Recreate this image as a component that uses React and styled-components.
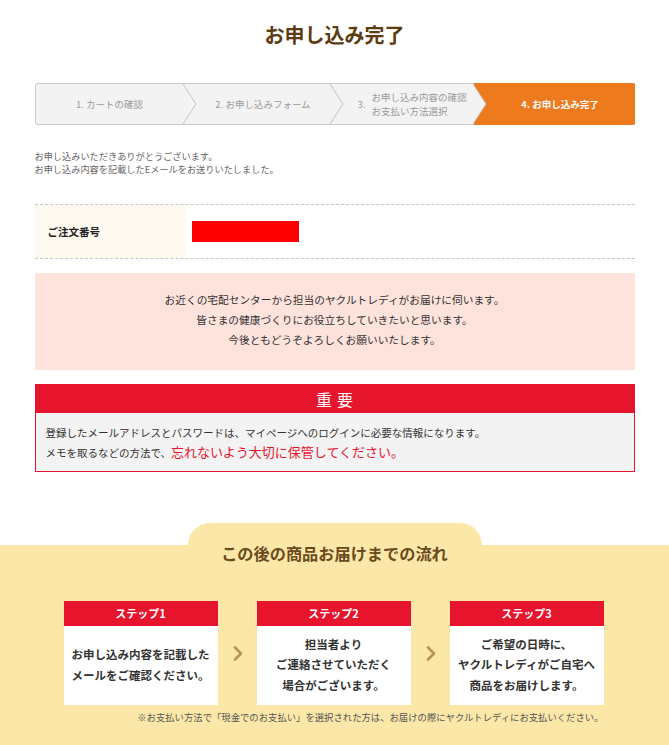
import React from "react";
import styled, { createGlobalStyle } from "styled-components";

const Global = createGlobalStyle`
  html, body { margin: 0; padding: 0; background: #fff; }
  body { font-family: "Noto Sans CJK JP", "Noto Sans", sans-serif; color: #333; }
  * { box-sizing: border-box; }
`;

const Page = styled.div`
  width: 669px;
  min-height: 745px;
  overflow: hidden;
`;

const Main = styled.div`
  width: 600px;
  margin: 0 auto;
`;

const Title = styled.h1`
  margin: 0;
  padding-top: 21px;
  text-align: center;
  font-size: 20px;
  line-height: 28px;
  font-weight: 700;
  color: #5e3c12;
`;

const Stepper = styled.div`
  display: flex;
  margin-top: 34px;
  height: 42px;
  border: 1px solid #cacaca;
  border-radius: 2px;
  background: #f3f3f3;
`;

const Step = styled.div`
  position: relative;
  flex: ${(p) => p.$basis ? `0 0 ${p.$basis}px` : "1 1 auto"};
  display: flex;
  align-items: center;
  justify-content: center;
  padding-left: ${(p) => p.$pad}px;
  font-size: 9.5px;
  line-height: 14px;
  color: ${(p) => (p.$active ? "#fff" : "#9a9a9a")};
  font-weight: ${(p) => (p.$active ? 700 : 400)};
  background: ${(p) => (p.$active ? "#ee7a1e" : "transparent")};
  margin: ${(p) => (p.$active ? "-1px -1px -1px 0" : "0")};
  border-radius: ${(p) => (p.$active ? "0 2px 2px 0" : "0")};
`;

const StepNum = styled.span`
  margin-right: 6px;
`;

const StepLines = styled.span`
  display: block;
`;

const ChevronSvg = styled.svg`
  position: absolute;
  top: 0;
  right: -13px;
  width: 14px;
  height: 100%;
  z-index: 2;
`;

const Chevron = () => (
  <ChevronSvg viewBox="0 0 14 40" preserveAspectRatio="none">
    <polygon points="0,0 13,20 0,40" fill="#f3f3f3" />
    <polyline points="0,0 13,20 0,40" fill="none" stroke="#c4c4c4" strokeWidth="1" />
  </ChevronSvg>
);

const Thanks = styled.p`
  margin: 25px 0 0;
  font-size: 9.2px;
  line-height: 13px;
  color: #666;
`;

const OrderRow = styled.div`
  display: flex;
  margin-top: 28px;
  height: 55px;
  border-top: 1px dashed #c6c6c6;
  border-bottom: 1px dashed #c6c6c6;
`;

const OrderLabel = styled.div`
  width: 150px;
  display: flex;
  align-items: center;
  padding-left: 13px;
  background: #fef9ee;
  font-size: 10.5px;
  font-weight: 700;
  color: #222;
`;

const OrderValue = styled.div`
  flex: 1;
  display: flex;
  align-items: center;
  padding-left: 7px;
`;

const Redacted = styled.div`
  width: 107px;
  height: 21px;
  background: #ff0000;
`;

const PinkBox = styled.div`
  margin-top: 14px;
  padding: 17px 0 20px;
  background: #fee2dc;
  text-align: center;
  font-size: 10.7px;
  line-height: 20px;
  color: #333;
`;

const Important = styled.div`
  margin-top: 14px;
  border: 1px solid #e6142d;
  background: #f3f3f3;
`;

const ImportantHead = styled.div`
  height: 28px;
  background: #e6142d;
  color: #fff;
  text-align: center;
  font-size: 16px;
  line-height: 28px;
  letter-spacing: 5px;
  padding-left: 5px;
`;

const ImportantBody = styled.div`
  padding: 10px 10px 9px;
  font-size: 10.5px;
  line-height: 19px;
  color: #333;
`;

const Alert = styled.span`
  color: #e6142d;
  font-size: 13px;
`;

const Flow = styled.section`
  margin-top: 51px;
`;

const Tab = styled.div`
  width: 294px;
  height: 22px;
  margin: 0 auto;
  background: #fbe8a9;
  border-radius: 24px 24px 0 0;
`;

const FlowBody = styled.div`
  background: #fbe8a9;
  padding-bottom: 40px;
`;

const FlowTitle = styled.h2`
  margin: 0;
  text-align: center;
  font-size: 16.2px;
  line-height: 16px;
  font-weight: 700;
  color: #6b4a1c;
`;

const Cards = styled.div`
  display: flex;
  justify-content: center;
  align-items: center;
  margin-top: 40px;
  margin-left: -2px;
`;

const Card = styled.div`
  width: 154px;
  height: 104px;
  background: #fff;
  display: flex;
  flex-direction: column;
`;

const CardHead = styled.div`
  height: 25px;
  background: #e6142d;
  color: #fff;
  font-weight: 700;
  font-size: 11px;
  line-height: 25px;
  text-align: center;
`;

const CardBody = styled.div`
  flex: 1;
  display: flex;
  align-items: center;
  justify-content: center;
  text-align: center;
  font-size: 11.5px;
  line-height: 20.5px;
  font-weight: 700;
  color: #333;
  padding-bottom: 2px;
`;

const ArrowBox = styled.div`
  width: 39px;
  display: flex;
  justify-content: center;
  padding-left: 1px;
`;

const Arrow = () => (
  <ArrowBox>
    <svg width="10" height="15" viewBox="0 0 10 15">
      <polyline points="2,1.5 8,7.5 2,13.5" fill="none" stroke="#b8945a" strokeWidth="2.6" strokeLinecap="round" strokeLinejoin="round" />
    </svg>
  </ArrowBox>
);

const Note = styled.p`
  width: 538px;
  margin: 5px auto 0;
  text-align: right;
  font-size: 9.35px;
  line-height: 14px;
  color: #555;
`;

export default function App() {
  return (
    <Page>
      <Global />
      <Main>
        <Title>お申し込み完了</Title>
        <Stepper>
          <Step $basis={148} $pad={0}>
            1. カートの確認
            <Chevron />
          </Step>
          <Step $basis={147} $pad={12}>
            2. お申し込みフォーム
            <Chevron />
          </Step>
          <Step $basis={143} $pad={20}>
            <StepNum>3.</StepNum>
            <StepLines>
              お申し込み内容の確認
              <br />
              お支払い方法選択
            </StepLines>
            <Chevron />
          </Step>
          <Step $active $pad={12}>4. お申し込み完了</Step>
        </Stepper>
        <Thanks>
          お申し込みいただきありがとうございます。
          <br />
          お申し込み内容を記載したEメールをお送りいたしました。
        </Thanks>
        <OrderRow>
          <OrderLabel>ご注文番号</OrderLabel>
          <OrderValue>
            <Redacted />
          </OrderValue>
        </OrderRow>
        <PinkBox>
          お近くの宅配センターから担当のヤクルトレディがお届けに伺います。
          <br />
          皆さまの健康づくりにお役立ちしていきたいと思います。
          <br />
          今後ともどうぞよろしくお願いいたします。
        </PinkBox>
        <Important>
          <ImportantHead>重要</ImportantHead>
          <ImportantBody>
            登録したメールアドレスとパスワードは、マイページへのログインに必要な情報になります。
            <br />
            メモを取るなどの方法で、<Alert>忘れないよう大切に保管してください。</Alert>
          </ImportantBody>
        </Important>
      </Main>
      <Flow>
        <Tab />
        <FlowBody>
          <FlowTitle>この後の商品お届けまでの流れ</FlowTitle>
          <Cards>
            <Card>
              <CardHead>ステップ1</CardHead>
              <CardBody>
                お申し込み内容を記載した
                <br />
                メールをご確認ください。
              </CardBody>
            </Card>
            <Arrow />
            <Card>
              <CardHead>ステップ2</CardHead>
              <CardBody>
                担当者より
                <br />
                ご連絡させていただく
                <br />
                場合がございます。
              </CardBody>
            </Card>
            <Arrow />
            <Card>
              <CardHead>ステップ3</CardHead>
              <CardBody>
                ご希望の日時に、
                <br />
                ヤクルトレディがご自宅へ
                <br />
                商品をお届けします。
              </CardBody>
            </Card>
          </Cards>
          <Note>
            ※お支払い方法で「現金でのお支払い」を選択された方は、お届けの際にヤクルトレディにお支払いください。
          </Note>
        </FlowBody>
      </Flow>
    </Page>
  );
}
